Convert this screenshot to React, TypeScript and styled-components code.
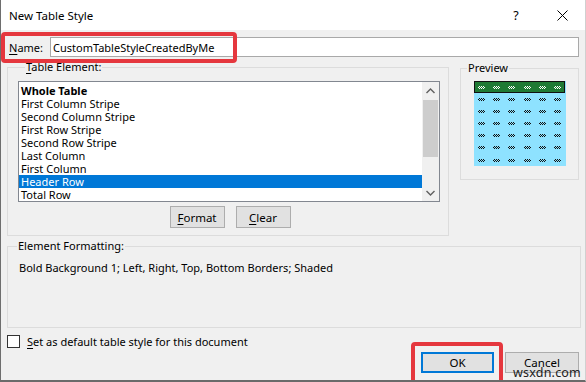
import React from "react";
import styled, { createGlobalStyle, css } from "styled-components";

const GlobalStyle = createGlobalStyle`
  html, body { margin: 0; padding: 0; background: #f0f0f0; }
  body { font-family: "Noto Sans", "Liberation Sans", sans-serif; font-size: 11px; color: #000; }
  * { box-sizing: border-box; }
`;

const Window = styled.div`
  position: relative;
  width: 586px;
  height: 382px;
  display: flex;
  flex-direction: column;
  background: #f0f0f0;
  border-left: 1px solid #6e6e6e;
  border-right: 1px solid #d0d0d0;
  border-bottom: 2px solid #6a6a6a;
  overflow: hidden;
`;

const TitleBar = styled.div`
  height: 30px;
  flex: none;
  background: #fff;
  display: flex;
  align-items: center;
  padding-left: 8px;
`;

const Title = styled.div`
  flex: 1;
  font-size: 11.5px;
`;

const TitleButton = styled.div`
  width: 46px;
  height: 30px;
  display: flex;
  align-items: center;
  justify-content: center;
  font-size: 12.5px;
`;

const Body = styled.div`
  flex: 1;
  display: flex;
  flex-direction: column;
  padding: 7px 0 0 6px;
`;

const NameRow = styled.div`
  display: flex;
  align-items: center;
  height: 20px;
`;

const Label = styled.span`
  width: 43px;
  padding-left: 2px;
  flex: none;
`;

const TextInput = styled.div`
  width: 529px;
  height: 20px;
  background: #fff;
  border: 1px solid #a9a9a9;
  padding-left: 2px;
  display: flex;
  align-items: center;
`;

const MiddleRow = styled.div`
  display: flex;
  gap: 11px;
  margin-top: 3px;
  align-items: flex-start;
`;

const Group = styled.fieldset<{ $w: number; $h?: number; $pad: string; $mt?: number }>`
  margin: ${(p) => p.$mt ?? 0}px 0 0 0;
  width: ${(p) => p.$w}px;
  ${(p) => p.$h !== undefined && css`height: ${p.$h}px;`}
  border: 1px solid #dcdcdc;
  padding: ${(p) => p.$pad};
  min-width: 0;
`;

const Legend = styled.legend<{ $ml?: number }>`
  padding: 0 1px;
  margin-left: ${(p) => p.$ml ?? 7}px;
  line-height: 14px;
  font-size: 11px;
`;

const Listbox = styled.div`
  width: 422px;
  height: 121px;
  background: #fff;
  border: 1px solid #828790;
  display: flex;
`;

const Items = styled.div`
  flex: 1;
  padding-top: 2px;
`;

const Item = styled.div<{ $sel?: boolean; $bold?: boolean }>`
  height: 13px;
  line-height: 13px;
  padding-left: 2px;
  white-space: nowrap;
  font-weight: ${(p) => (p.$bold ? 700 : 400)};
  background: ${(p) => (p.$sel ? "#0078d7" : "transparent")};
  color: ${(p) => (p.$sel ? "#fff" : "#000")};
`;

const Scrollbar = styled.div`
  width: 17px;
  background: #f0f0f0;
  display: flex;
  flex-direction: column;
  align-items: center;
`;

const ScrollArrow = styled.div`
  height: 17px;
  width: 17px;
  display: flex;
  align-items: center;
  justify-content: center;
`;

const Thumb = styled.div`
  width: 15px;
  height: 57px;
  margin-top: 1px;
  background: #cdcdcd;
`;

const Spacer = styled.div`
  flex: 1;
`;

const ButtonRow = styled.div`
  display: flex;
  justify-content: center;
  gap: 11px;
  margin-top: 4px;
  padding-left: 2px;
`;

const Button = styled.div<{ $w: number; $h: number; $default?: boolean }>`
  width: ${(p) => p.$w}px;
  height: ${(p) => p.$h}px;
  background: #e1e1e1;
  border: 1px solid ${(p) => (p.$default ? "#0078d7" : "#adadad")};
  ${(p) => p.$default && css`box-shadow: inset 0 0 0 1px #0078d7;`}
  display: flex;
  align-items: center;
  justify-content: center;
  font-size: 11.5px;
`;

const PreviewTable = styled.div`
  width: 92px;
  margin: 6px auto 0;
  display: grid;
  grid-template-columns: repeat(6, 1fr);
  background: #8ee2ff;
`;

const Cell = styled.div<{ $head?: boolean }>`
  height: ${(p) => (p.$head ? 12 : 12.2)}px;
  display: flex;
  align-items: center;
  justify-content: center;
  background: ${(p) => (p.$head ? "#1f7a34" : "transparent")};
  ${(p) =>
    p.$head &&
    css`
      border-top: 1px solid #111;
      border-bottom: 1px solid #111;
    `}
`;

const HeadFirst = styled(Cell)`
  border-left: 1px solid #111;
`;
const HeadLast = styled(Cell)`
  border-right: 1px solid #111;
`;

const FormatText = styled.div`
  padding-left: 11px;
  line-height: 14px;
  margin-top: 8px;
`;

const CheckRow = styled.div`
  display: flex;
  align-items: center;
  gap: 7px;
  margin-top: 7px;
  height: 13px;
`;

const CheckBox = styled.div`
  width: 13px;
  height: 13px;
  background: #fff;
  border: 1px solid #333;
`;

const BottomButtons = styled.div`
  display: flex;
  justify-content: flex-end;
  gap: 11px;
  margin-top: 4px;
  padding-right: 6px;
`;

const Highlight = styled.div<{ $l: number; $t: number; $w: number; $h: number }>`
  position: absolute;
  left: ${(p) => p.$l}px;
  top: ${(p) => p.$t}px;
  width: ${(p) => p.$w}px;
  height: ${(p) => p.$h}px;
  border: 4px solid #e5373e;
  border-radius: 4px;
  pointer-events: none;
`;

const Watermark = styled.div`
  position: absolute;
  left: 512px;
  top: 364px;
  font-size: 12.5px;
  color: #222;
  letter-spacing: 0.2px;
`;

const U = styled.span`
  text-decoration: underline;
  text-underline-offset: 2px;
`;

const zigPixels: [number, number][] = [
  [1, 0], [3, 0], [5, 0],
  [0, 1], [2, 1], [4, 1], [6, 1],
  [1, 2], [3, 2], [5, 2],
];

const Zig = ({ color }: { color: string }) => (
  <svg width="7" height="3" viewBox="0 0 7 3" shapeRendering="crispEdges">
    {zigPixels.map(([x, y]) => (
      <rect key={x + "-" + y} x={x} y={y} width="1" height="1" fill={color} />
    ))}
  </svg>
);

const Chevron = ({ up }: { up?: boolean }) => (
  <svg width="9" height="6" viewBox="0 0 9 6">
    <polyline
      points={up ? "0.5,5 4.5,1 8.5,5" : "0.5,1 4.5,5 8.5,1"}
      fill="none"
      stroke="#606060"
      strokeWidth="1.4"
    />
  </svg>
);

const items = [
  "Whole Table",
  "First Column Stripe",
  "Second Column Stripe",
  "First Row Stripe",
  "Second Row Stripe",
  "Last Column",
  "First Column",
  "Header Row",
  "Total Row",
];

export default function App() {
  const cols = [0, 1, 2, 3, 4, 5];
  const rows = [0, 1, 2, 3, 4, 5];
  return (
    <>
      <GlobalStyle />
      <Window>
        <TitleBar>
          <Title>New Table Style</Title>
          <TitleButton>?</TitleButton>
          <TitleButton>
            <svg width="11" height="11" viewBox="0 0 11 11">
              <path d="M0.5 0.5 L10.5 10.5 M10.5 0.5 L0.5 10.5" stroke="#000" strokeWidth="1" />
            </svg>
          </TitleButton>
        </TitleBar>
        <Body>
          <NameRow>
            <Label>
              <U>N</U>ame:
            </Label>
            <TextInput>CustomTableStyleCreatedByMe</TextInput>
          </NameRow>
          <MiddleRow>
            <Group $w={442} $pad="7px 8px 7px 10px">
              <Legend $ml={7}>
                <U>T</U>able Element:
              </Legend>
              <Listbox>
                <Items>
                  {items.map((t, i) => (
                    <Item key={t} $bold={i === 0} $sel={t === "Header Row"}>
                      {t}
                    </Item>
                  ))}
                </Items>
                <Scrollbar>
                  <ScrollArrow>
                    <Chevron up />
                  </ScrollArrow>
                  <Thumb />
                  <Spacer />
                  <ScrollArrow>
                    <Chevron />
                  </ScrollArrow>
                </Scrollbar>
              </Listbox>
              <ButtonRow>
                <Button $w={55} $h={22}>
                  <U>F</U>ormat
                </Button>
                <Button $w={55} $h={22}>
                  <U>C</U>lear
                </Button>
              </ButtonRow>
            </Group>
            <Group $w={119} $h={119} $pad="0" $mt={1}>
              <Legend $ml={6}>Preview</Legend>
              <PreviewTable>
                {cols.map((c) => {
                  const C = c === 0 ? HeadFirst : c === 5 ? HeadLast : Cell;
                  return (
                    <C key={"h" + c} $head>
                      <Zig color="#fff" />
                    </C>
                  );
                })}
                {rows.map((r) =>
                  cols.map((c) => (
                    <Cell key={r + "-" + c}>
                      <Zig color="#111" />
                    </Cell>
                  ))
                )}
              </PreviewTable>
            </Group>
          </MiddleRow>
          <Group $w={574} $h={89} $pad="0" $mt={3}>
            <Legend $ml={9}>Element Formatting:</Legend>
            <FormatText>Bold Background 1; Left, Right, Top, Bottom Borders; Shaded</FormatText>
          </Group>
          <CheckRow>
            <CheckBox />
            <span>
              <U>S</U>et as default table style for this document
            </span>
          </CheckRow>
          <BottomButtons>
            <Button $w={73} $h={21} $default>
              OK
            </Button>
            <Button $w={74} $h={21}>
              Cancel
            </Button>
          </BottomButtons>
        </Body>
        <Highlight $l={0} $t={32} $w={236} $h={31} />
        <Highlight $l={410} $t={342} $w={92} $h={42} />
        <Watermark>wsxdn.com</Watermark>
      </Window>
    </>
  );
}
